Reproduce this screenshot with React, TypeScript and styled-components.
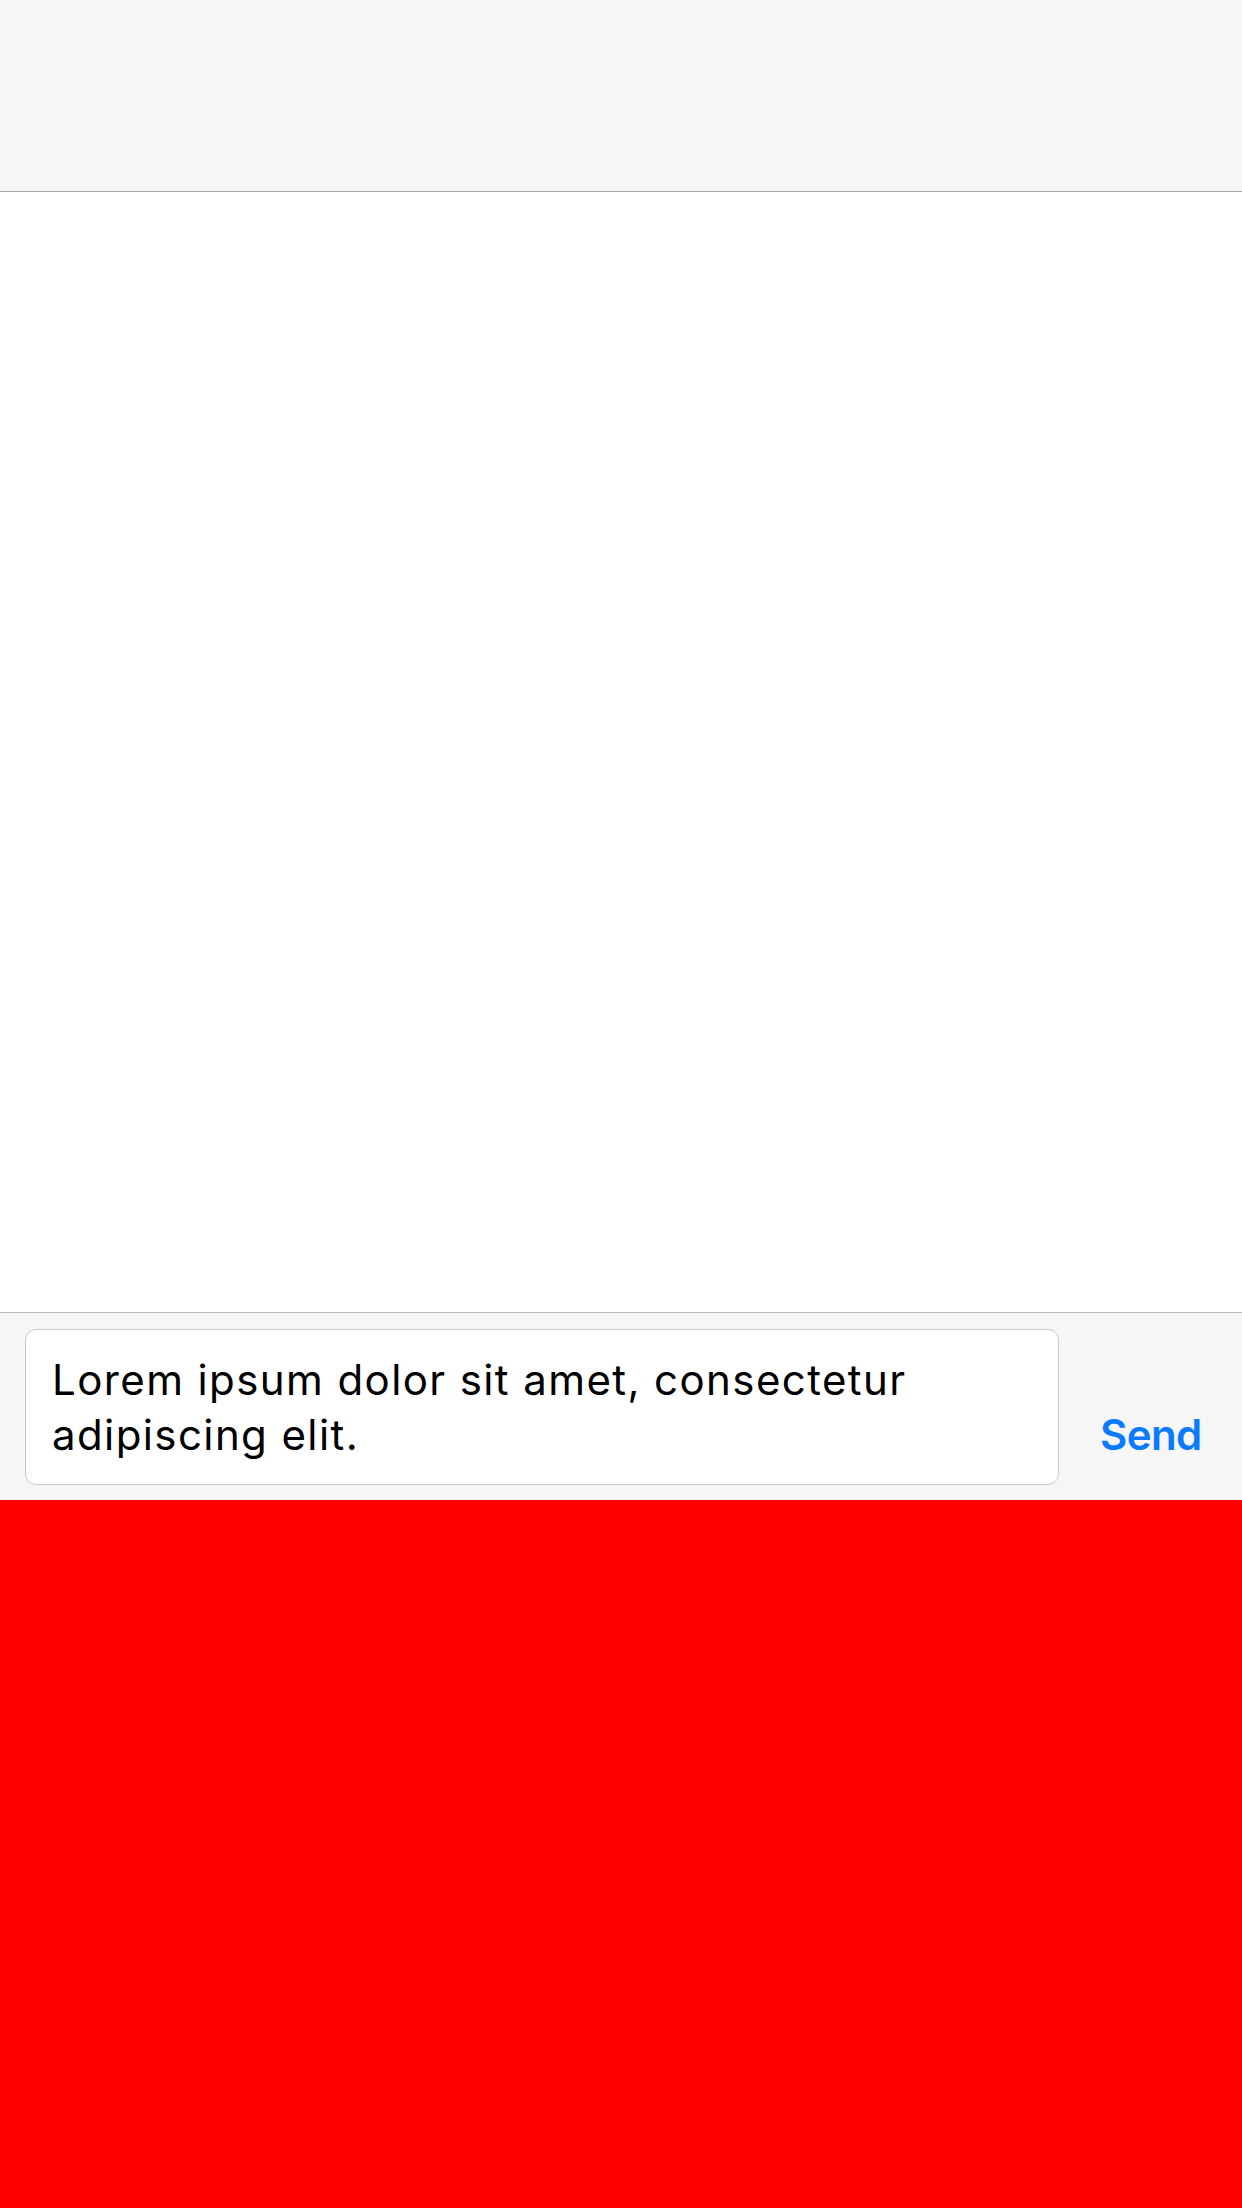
import React from "react";
import styled, { createGlobalStyle } from "styled-components";

const GlobalStyle = createGlobalStyle`
  html, body {
    margin: 0;
    padding: 0;
    background: #ffffff;
  }
  body {
    font-family: Inter, "Noto Sans", "Liberation Sans", sans-serif;
    -webkit-font-smoothing: antialiased;
  }
  * { box-sizing: border-box; }
`;

const Screen = styled.div`
  display: flex;
  flex-direction: column;
  width: 100%;
  height: 2208px;
  overflow: hidden;
`;

const NavBar = styled.header`
  flex: 0 0 192px;
  background: #f6f6f6;
  border-bottom: 1px solid #a9a9a9;
`;

const MessageList = styled.main`
  flex: 1 1 auto;
  background: #ffffff;
`;

const Composer = styled.div`
  flex: 0 0 auto;
  display: flex;
  align-items: flex-end;
  gap: 41px;
  padding: 16px 43px 15px 25px;
  background: #f6f6f6;
  border-top: 1px solid #bdbdbd;
`;

const TextField = styled.div`
  flex: 1 1 auto;
  min-width: 0;
  padding: 22px 24px 22px 26px;
  background: #ffffff;
  border: 1px solid #c9c9c9;
  border-radius: 11px;
  color: #000000;
  font-size: 42px;
  line-height: 55px;
  letter-spacing: 1.4px;
  font-weight: 400;
`;

const SendButton = styled.button`
  flex: 0 0 auto;
  width: 99px;
  margin: 0 0 23px 0;
  padding: 0;
  border: none;
  background: none;
  color: #0a7bff;
  font-family: inherit;
  font-size: 42px;
  line-height: 55px;
  letter-spacing: -0.6px;
  font-weight: 600;
  text-align: left;
  white-space: nowrap;
  cursor: pointer;
`;

const Keyboard = styled.div`
  flex: 0 0 708px;
  background: #ff0000;
`;

export default function App() {
  return (
    <>
      <GlobalStyle />
      <Screen>
        <NavBar />
        <MessageList />
        <Composer>
          <TextField>Lorem ipsum dolor sit amet, consectetur adipiscing elit.</TextField>
          <SendButton>Send</SendButton>
        </Composer>
        <Keyboard />
      </Screen>
    </>
  );
}
